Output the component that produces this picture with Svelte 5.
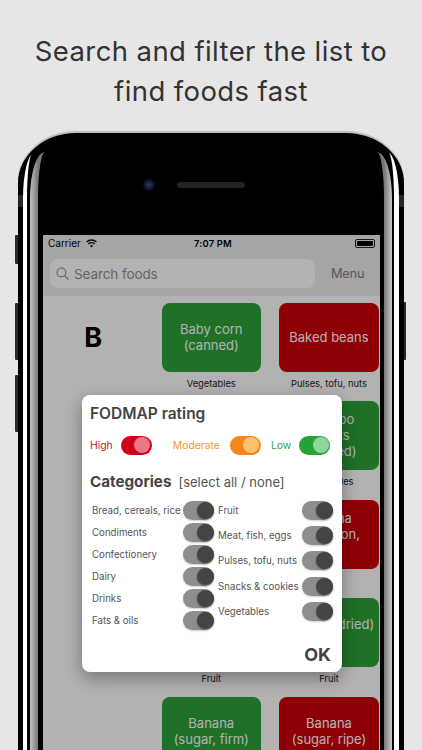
<script>
	const rows = [
		{ letter: 'B', foods: [
			{ lines: ['Baby corn', '(canned)'], rating: 'low', category: 'Vegetables' },
			{ lines: ['Baked beans'], rating: 'high', category: 'Pulses, tofu, nuts' }
		] },
		{ foods: [
			{ lines: ['Bamboo', 'leaves'], rating: 'low', category: 'Vegetables' },
			{ lines: ['Bamboo', 'shoots', '(canned)'], rating: 'low', category: 'Vegetables' }
		] },
		{ foods: [
			{ lines: ['Banana'], rating: 'low', category: 'Fruit' },
			{ lines: ['Banana', '(common,', 'ripe)'], rating: 'high', category: 'Fruit' }
		] },
		{ foods: [
			{ lines: ['Banana'], rating: 'low', category: 'Fruit' },
			{ lines: ['Banana (dried)', 'chip'], rating: 'low', category: 'Fruit' }
		] },
		{ foods: [
			{ lines: ['Banana', '(sugar, firm)'], rating: 'low', category: 'Fruit' },
			{ lines: ['Banana', '(sugar, ripe)'], rating: 'high', category: 'Fruit' }
		] }
	];

	const ratings = [
		{ label: 'High', key: 'high' },
		{ label: 'Moderate', key: 'moderate' },
		{ label: 'Low', key: 'low' }
	];

	const leftCategories = ['Bread, cereals, rice', 'Condiments', 'Confectionery', 'Dairy', 'Drinks', 'Fats & oils'];
	const rightCategories = ['Fruit', 'Meat, fish, eggs', 'Pulses, tofu, nuts', 'Snacks & cookies', 'Vegetables'];
</script>

<div class="page">
	<h1>Search and filter the list to<br />find foods fast</h1>

	<div class="phone">
		<span class="side-btn left-a"></span>
		<span class="side-btn left-b"></span>
		<span class="side-btn left-c"></span>
		<span class="side-btn right-a"></span>
		<span class="notch notch-left"></span>
		<span class="notch notch-right"></span>

		<div class="band-white">
			<div class="band-black">
				<div class="band-metal">
					<div class="bezel">
						<div class="earpiece">
							<span class="camera"></span>
							<span class="speaker"></span>
						</div>

						<div class="screen">
							<header class="top">
								<div class="status">
									<span class="carrier">
										Carrier
										<svg width="11" height="9" viewBox="0 0 11 9">
											<path d="M0.6 3 A7 7 0 0 1 10.4 3" fill="none" stroke="#111" stroke-width="1.4" />
											<path d="M2.4 4.9 A4.5 4.5 0 0 1 8.6 4.9" fill="none" stroke="#111" stroke-width="1.4" />
											<path d="M4 6.8 A2.2 2.2 0 0 1 7 6.8 L5.5 8.4 Z" fill="#111" />
										</svg>
									</span>
									<span class="time">7:07 PM</span>
									<span class="battery"><i></i></span>
								</div>
								<div class="searchbar">
									<div class="search">
										<svg width="13" height="13" viewBox="0 0 13 13">
											<circle cx="5.4" cy="5.4" r="4.4" fill="none" stroke="#8c8c8c" stroke-width="1.1" />
											<path d="M8.6 8.6 L12.2 12.2" stroke="#8c8c8c" stroke-width="1.2" stroke-linecap="round" />
										</svg>
										<span>Search foods</span>
									</div>
									<span class="menu">Menu</span>
								</div>
							</header>

							<div class="list">
								{#each rows as row}
									<div class="letter">{row.letter ?? ''}</div>
									{#each row.foods as food}
										<div class="food">
											<div class="tile {food.rating}">
												{#each food.lines as line}
													<span>{line}</span>
												{/each}
											</div>
											<div class="category">{food.category}</div>
										</div>
									{/each}
								{/each}
							</div>

							<div class="scrim"></div>

							<div class="dialog">
								<h2>FODMAP rating</h2>
								<div class="ratings">
									{#each ratings as rating}
										<span class="rating-label {rating.key}">{rating.label}</span>
										<span class="switch {rating.key}"><i></i></span>
									{/each}
								</div>

								<div class="cat-head">
									<h2>Categories</h2>
									<span>[select all / none]</span>
								</div>

								<div class="cats">
									<div class="cat-col left">
										{#each leftCategories as cat}
											<div class="cat-row">
												<span>{cat}</span>
												<span class="switch off"><i></i></span>
											</div>
										{/each}
									</div>
									<div class="cat-col right">
										{#each rightCategories as cat}
											<div class="cat-row">
												<span>{cat}</span>
												<span class="switch off"><i></i></span>
											</div>
										{/each}
									</div>
								</div>

								<div class="ok">OK</div>
							</div>
						</div>
					</div>
				</div>
			</div>
		</div>
	</div>
</div>

<style>
	:global(body) {
		margin: 0;
		background: #e6e6e6;
	}

	.page {
		height: 750px;
		overflow: hidden;
		background: #e6e6e6;
		font-family: Inter, 'Liberation Sans', sans-serif;
		padding-top: 31px;
		box-sizing: border-box;
	}

	h1 {
		margin: 0 0 22px;
		font-size: 27.5px;
		line-height: 40px;
		font-weight: 400;
		letter-spacing: 0.4px;
		text-align: center;
		color: #333;
	}

	.phone {
		position: relative;
		margin-left: 18px;
		width: 386px;
		background: #000;
		border-radius: 58px 58px 0 0 / 50px 50px 0 0;
		box-shadow: 0 -1.5px 1px #bdbdbd;
		padding: 24px 5px 0;
		box-sizing: border-box;
	}

	.side-btn {
		position: absolute;
		background: #2a2a2a;
		width: 3px;
		border-radius: 1px 0 0 1px;
	}

	.left-a { left: -3px; top: 102px; height: 29px; }
	.left-b { left: -3px; top: 170px; height: 57px; }
	.left-c { left: -3px; top: 242px; height: 57px; }
	.right-a { right: -2px; top: 169px; height: 58px; width: 2px; border-radius: 0 1px 1px 0; }

	.notch {
		position: absolute;
		top: 62px;
		width: 5px;
		height: 12px;
		background: #262626;
	}

	.notch-left { left: 0; }
	.notch-right { right: 0; }

	.band-white {
		background: #fff;
		border-radius: 12px 12px 0 0 / 46px 46px 0 0;
		padding: 0 5px 0 4px;
	}

	.band-black {
		background: #000;
		border-radius: 6px 6px 0 0 / 46px 46px 0 0;
		padding: 0 2px 0 3px;
	}

	.band-metal {
		margin-top: -5px;
		position: relative;
		background: linear-gradient(90deg, #c0c0c0 0, #777 8px, #333 50%, #777 calc(100% - 8px), #c8c8c8 100%);
		border-radius: 15px 15px 0 0 / 46px 46px 0 0;
		padding: 0 8px;
	}

	.bezel {
		background: #000;
		border-radius: 7px 7px 0 0 / 46px 46px 0 0;
		padding: 0 4px 0 5px;
	}

	.earpiece {
		height: 83px;
		display: flex;
		align-items: center;
		padding: 0 0 18px 100px;
		gap: 22px;
		box-sizing: border-box;
	}

	.camera {
		width: 12px;
		height: 12px;
		border-radius: 50%;
		background: radial-gradient(circle, #2a3f78 0, #16213f 35%, #0c0c12 70%);
	}

	.speaker {
		width: 68px;
		height: 6px;
		border-radius: 3px;
		background: #232323;
	}

	.screen {
		position: relative;
		height: 560px;
		background: #fff;
		overflow: hidden;
	}

	.top {
		background: #ededed;
		height: 61px;
	}

	.status {
		height: 16px;
		display: grid;
		grid-template-columns: 1fr auto 1fr;
		align-items: center;
		padding: 0 5px;
		font-size: 10px;
		color: #000;
	}

	.carrier {
		display: flex;
		align-items: center;
		gap: 5px;
	}

	.time {
		font-size: 9.4px;
		font-weight: 600;
		letter-spacing: 0.2px;
		margin-left: 3px;
	}

	.battery {
		justify-self: end;
		width: 16px;
		height: 5px;
		border: 1px solid #222;
		border-radius: 2px;
		padding: 1px;
		display: flex;
	}

	.battery i {
		flex: 1;
		background: #000;
		border-radius: 1px;
	}

	.searchbar {
		display: flex;
		align-items: center;
		padding: 8px 0 0 7px;
	}

	.search {
		width: 265px;
		height: 29px;
		box-sizing: border-box;
		background: #fff;
		border-radius: 8px;
		display: flex;
		align-items: center;
		gap: 5px;
		padding-left: 6px;
		font-size: 13.5px;
		letter-spacing: -0.1px;
		color: #929292;
	}

	.menu {
		margin-left: 16px;
		font-size: 12.8px;
		letter-spacing: -0.2px;
		color: #7d7d7d;
	}

	.list {
		display: grid;
		grid-template-columns: 100.5px 99.5px 100px;
		column-gap: 18px;
		padding-top: 7px;
	}

	.letter {
		text-align: center;
		font-size: 27px;
		font-weight: 700;
		color: #000;
		line-height: 69px;
	}

	.food {
		height: 98.4px;
	}

	.tile {
		height: 69px;
		padding-bottom: 1px;
		box-sizing: border-box;
		border-radius: 8px;
		display: flex;
		flex-direction: column;
		align-items: center;
		justify-content: center;
		color: #fff;
		font-size: 13px;
		line-height: 16px;
		white-space: nowrap;
	}

	.tile.low { background: #2ba339; }
	.tile.high { background: #cc000a; }

	.category {
		text-align: center;
		font-size: 9.3px;
		line-height: 12px;
		margin-top: 6px;
		color: #222;
		white-space: nowrap;
	}

	.scrim {
		position: absolute;
		inset: 0;
		background: rgba(0, 0, 0, 0.3);
	}

	.dialog {
		position: absolute;
		left: 39px;
		top: 160px;
		width: 260px;
		height: 277px;
		background: #fff;
		border-radius: 8px;
		box-shadow: 0 6px 18px rgba(0, 0, 0, 0.35);
		box-sizing: border-box;
		padding: 9px 8px 0;
		color: #444;
	}

	.dialog h2 {
		margin: 0;
		font-size: 15.5px;
		line-height: 19px;
		font-weight: 600;
	}

	.ratings {
		display: flex;
		align-items: center;
		margin-top: 12px;
		height: 20px;
		font-size: 10.4px;
	}

	.rating-label.high { color: #c5142a; margin-right: 8px; }
	.rating-label.moderate { color: #f2952a; margin: 0 10px 0 21px; }
	.rating-label.low { color: #3a9d4a; margin: 0 8px 0 10px; }

	.switch {
		display: flex;
		align-items: center;
		justify-content: flex-end;
		width: 31px;
		height: 19px;
		border-radius: 10px;
		flex-shrink: 0;
	}

	.switch i {
		width: 16px;
		height: 16px;
		border-radius: 50%;
		margin-right: 1.5px;
	}

	.switch.high { background: #d0021b; }
	.switch.high i { background: #e87a85; }
	.switch.moderate { background: #f8841c; }
	.switch.moderate i { background: #fdc26e; }
	.switch.low { background: #27a138; }
	.switch.low i { background: #8fd69a; }

	.switch.off {
		background: #8e8e8e;
		box-shadow: 0 1px 2px rgba(0, 0, 0, 0.2);
	}

	.switch.off i {
		width: 17px;
		height: 17px;
		margin-right: 0;
		background: #444;
		box-shadow: 0 1px 2px rgba(0, 0, 0, 0.35);
	}

	.cat-head {
		display: flex;
		align-items: baseline;
		gap: 7px;
		margin-top: 17px;
		height: 22px;
	}

	.cat-head h2 {
		font-size: 15.2px;
		font-weight: 700;
	}

	.cat-head span {
		font-size: 13px;
		color: #555;
	}

	.cats {
		display: flex;
		margin-top: 7px;
		font-size: 9.7px;
		color: #555;
	}

	.cat-col {
		display: flex;
		flex-direction: column;
	}

	.cat-col.left {
		width: 122px;
		margin-left: 2px;
		margin-right: 4px;
		gap: 3px;
	}

	.cat-col.right {
		width: 115px;
		gap: 6.2px;
	}

	.cat-row {
		display: flex;
		align-items: center;
		justify-content: space-between;
		height: 19px;
		white-space: nowrap;
	}

	.ok {
		position: absolute;
		right: 11px;
		bottom: 7px;
		font-size: 18px;
		font-weight: 700;
		color: #444;
	}
</style>
